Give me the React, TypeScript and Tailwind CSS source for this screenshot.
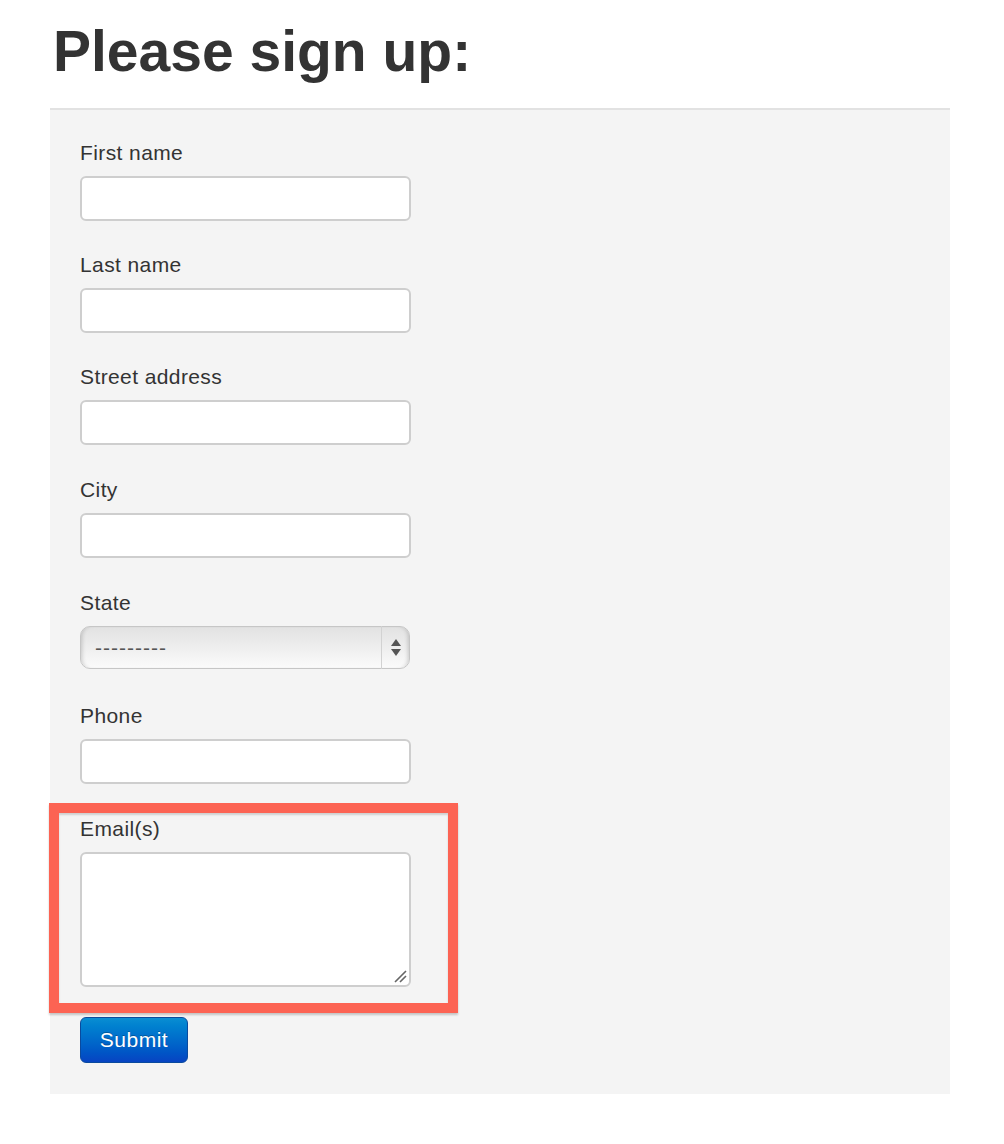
import React from "react";

const fields = [
  { id: "first_name", label: "First name", gap: "mb-[29px]" },
  { id: "last_name", label: "Last name", gap: "mb-[29px]" },
  { id: "street", label: "Street address", gap: "mb-[30px]" },
  { id: "city", label: "City", gap: "mb-[30px]" },
];

const labelCls = "mb-[8px] block text-[21px] leading-[30px] tracking-[0.4px]";
const inputCls =
  "block w-[331px] h-[45px] rounded-[6px] border-2 border-[#cecece] bg-white px-[8px] text-[21px] text-[#555] outline-none";

const App: React.FC = () => {
  return (
    <div className="min-h-screen bg-white px-[50px] pb-[52px] font-['Liberation_Sans',Arial,sans-serif] text-[#333]">
      <h1 className="ml-[3px] mt-[21px] mb-[27px] text-[57px] font-bold leading-[60px] text-[#333]">
        Please sign up:
      </h1>

      <form className="w-[900px] border-t-2 border-[#e2e2e2] bg-[#f4f4f4] pl-[30px] pt-[28px] pb-[31px]">
        {fields.map((f) => (
          <div key={f.id} className={f.gap}>
            <label htmlFor={f.id} className={labelCls}>
              {f.label}
            </label>
            <input id={f.id} type="text" className={inputCls} />
          </div>
        ))}

        <div className="mb-[32px]">
          <label htmlFor="state" className={labelCls}>
            State
          </label>
          <div className="relative mt-[2px] h-[43px] w-[330px]">
            <select
              id="state"
              className="block h-full w-full appearance-none rounded-[10px] border border-[#c6c6c6] bg-gradient-to-b from-[#e2e2e2] via-[#eeeeee] to-[#fbfbfb] pl-[14px] text-[21px] tracking-[1px] text-[#555] shadow-[inset_4px_0_4px_-3px_rgba(0,0,0,0.18),inset_-4px_0_4px_-3px_rgba(0,0,0,0.18)] outline-none"
            >
              <option>---------</option>
            </select>
            <div className="pointer-events-none absolute right-0 top-0 flex h-full w-[29px] flex-col items-center justify-center gap-[3px] border-l border-[#d2d2d2]">
              <svg width="10" height="7" viewBox="0 0 10 7">
                <path d="M5 0 L10 7 L0 7 Z" fill="#555" />
              </svg>
              <svg width="10" height="7" viewBox="0 0 10 7">
                <path d="M0 0 L10 0 L5 7 Z" fill="#555" />
              </svg>
            </div>
          </div>
        </div>

        <div className="mb-[30px]">
          <label htmlFor="phone" className={labelCls}>
            Phone
          </label>
          <input id="phone" type="text" className={inputCls} />
        </div>

        <div className="relative">
          <div className="pointer-events-none absolute -left-[31px] -top-[11px] h-[210px] w-[409px] border-[10px] border-[#fc6353] shadow-[0_2px_2px_rgba(0,0,0,0.2),inset_0_2px_2px_rgba(0,0,0,0.15)]" />
          <label htmlFor="emails" className={labelCls}>
            Email(s)
          </label>
          <div className="relative w-[331px]">
            <textarea
              id="emails"
              className="block h-[135px] w-[331px] resize-none rounded-[6px] border-2 border-[#cecece] bg-white px-[8px] text-[21px] text-[#555] outline-none"
            />
            <svg
              className="pointer-events-none absolute bottom-[4px] right-[4px]"
              width="13"
              height="13"
              viewBox="0 0 13 13"
            >
              <path d="M1 12 L12 1 M6 12 L12 6" stroke="#666" strokeWidth="1.6" />
            </svg>
          </div>
        </div>

        <button
          type="submit"
          className="mt-[30px] flex h-[46px] w-[108px] items-center justify-center rounded-[6px] border border-[#0a4a9e] bg-gradient-to-b from-[#0a8ed2] to-[#0843c2] text-[21px] tracking-[0.5px] text-white [text-shadow:0_-1px_0_rgba(0,0,0,0.25)]"
        >
          Submit
        </button>
      </form>
    </div>
  );
};

export default App;
